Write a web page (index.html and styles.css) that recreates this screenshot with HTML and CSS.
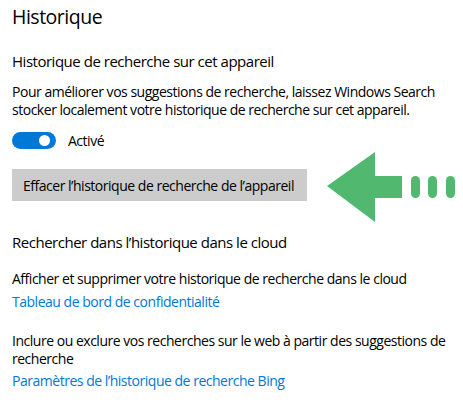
FILE: index.html
```html
<!DOCTYPE html>
<html lang="fr">
<head>
  <meta charset="UTF-8" />
  <title>Historique</title>
  <link rel="stylesheet" href="styles.css">
</head>
<body>
  <h1 class="page-title">Historique</h1>

  <h2 class="section-title">Historique de recherche sur cet appareil</h2>
  <p class="desc">Pour améliorer vos suggestions de recherche, laissez Windows Search stocker localement votre historique de recherche sur cet appareil.</p>

  <div class="toggle-row">
    <span class="toggle on"><span class="knob"></span></span>
    <span class="toggle-label">Activé</span>
  </div>

  <div class="button-row">
    <button type="button" class="clear-btn">Effacer l’historique de recherche de l’appareil</button>
    <svg class="arrow" width="130" height="72" viewBox="0 0 130 72">
      <polygon points="0,34 48,0 48,24 75,24 75,46 48,46 48,70" fill="#50b96f" />
      <rect x="84" y="24" width="9" height="22" rx="4.5" fill="#50b96f" />
      <rect x="101" y="24" width="9" height="22" rx="4.5" fill="#50b96f" />
      <rect x="119" y="24" width="9" height="22" rx="4.5" fill="#50b96f" />
    </svg>
  </div>

  <h2 class="section-title cloud">Rechercher dans l’historique dans le cloud</h2>
  <p class="desc gap">Afficher et supprimer votre historique de recherche dans le cloud</p>
  <a class="link" href="#">Tableau de bord de confidentialité</a>

  <p class="desc gap-lg">Inclure ou exclure vos recherches sur le web à partir des suggestions de recherche</p>
  <a class="link" href="#">Paramètres de l’historique de recherche Bing</a>
</body>
</html>
```

FILE: styles.css
```css
body {
  font-family: "Open Sans", "Noto Sans", Arial, sans-serif;
  color: #000;
  background: #fff;
  margin: 0;
  padding: 0 8px 0 12px;
  letter-spacing: -0.03em;
}
.page-title {
  font-size: 19.5px;
  font-weight: normal;
  line-height: 28px;
  margin: 3px 0 0;
}
.section-title {
  font-size: 15px;
  font-weight: normal;
  line-height: 20px;
  margin: 20px 0 0;
}
.section-title.cloud {
  margin-top: 31px;
}
.desc {
  font-size: 14px;
  line-height: 18px;
  margin: 12px 0 0;
}
.desc.gap {
  margin-top: 18px;
}
.desc.gap-lg {
  margin-top: 21px;
}
.toggle-row {
  display: flex;
  align-items: center;
  margin-top: 12px;
  height: 18px;
}
.toggle {
  width: 44px;
  height: 17px;
  border-radius: 9px;
  background: #0078d7;
  position: relative;
  box-sizing: border-box;
}
.toggle .knob {
  position: absolute;
  right: 6px;
  top: 3px;
  width: 11px;
  height: 11px;
  border-radius: 50%;
  background: #fff;
}
.toggle-label {
  font-size: 14px;
  margin-left: 12px;
}
.button-row {
  position: relative;
  margin-top: 20px;
}
.clear-btn {
  font-family: inherit;
  font-size: 14px;
  letter-spacing: inherit;
  height: 32px;
  padding: 0 13px 0 11px;
  background: #cccccc;
  color: #000;
  border: none;
  border-radius: 0;
}
.arrow {
  position: absolute;
  left: 315px;
  top: -17px;
}
.link {
  display: block;
  font-size: 14px;
  line-height: 18px;
  margin-top: 5px;
  color: #0078d7;
  text-decoration: none;
}
.desc.gap-lg + .link {
  margin-top: 4px;
}
```
